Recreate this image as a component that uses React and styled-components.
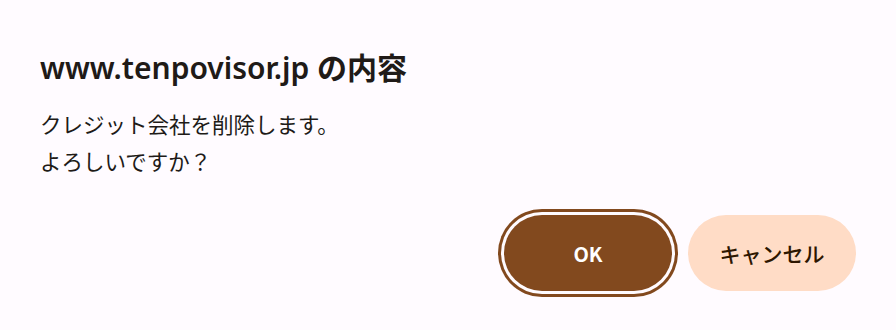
import React from "react";
import styled, { createGlobalStyle } from "styled-components";

const GlobalStyle = createGlobalStyle`
  html, body {
    margin: 0;
    padding: 0;
    background: #fffbff;
  }
  body {
    font-family: "Noto Sans", "Noto Sans CJK JP", sans-serif;
    color: #201a17;
  }
`;

const Dialog = styled.div`
  width: 896px;
  height: 330px;
  box-sizing: border-box;
  padding: 50px 40px 0 40px;
  background: #fffbff;
  display: flex;
  flex-direction: column;
`;

const Title = styled.h1`
  margin: 0;
  font-family: "Noto Sans", "Noto Sans CJK JP", sans-serif;
  font-size: 30px;
  font-weight: 600;
  line-height: 36px;
  color: #201a17;
`;

const Message = styled.div`
  margin-top: 19px;
  font-family: "Noto Sans CJK JP", sans-serif;
  font-size: 21.5px;
  line-height: 37px;
  color: #201a17;
`;

const Actions = styled.div`
  margin-top: 36px;
  display: flex;
  justify-content: flex-end;
  gap: 16px;
`;

const Button = styled.button`
  width: 168px;
  height: 76px;
  border: none;
  border-radius: 38px;
  font-family: "Noto Sans CJK JP", sans-serif;
  font-size: ${(p) => (p.$primary ? "20px" : "21px")};
  font-weight: ${(p) => (p.$primary ? 700 : 500)};
  background: ${(p) => (p.$primary ? "#82491e" : "#ffdcc6")};
  color: ${(p) => (p.$primary ? "#ffffff" : "#2d1600")};
  box-shadow: ${(p) =>
    p.$primary ? "0 0 0 3px #fffbff, 0 0 0 6px #82491e" : "none"};
  cursor: pointer;
`;

export default function App() {
  return (
    <>
      <GlobalStyle />
      <Dialog>
        <Title>www.tenpovisor.jp の内容</Title>
        <Message>
          クレジット会社を削除します。
          <br />
          よろしいですか？
        </Message>
        <Actions>
          <Button $primary>OK</Button>
          <Button>キャンセル</Button>
        </Actions>
      </Dialog>
    </>
  );
}
